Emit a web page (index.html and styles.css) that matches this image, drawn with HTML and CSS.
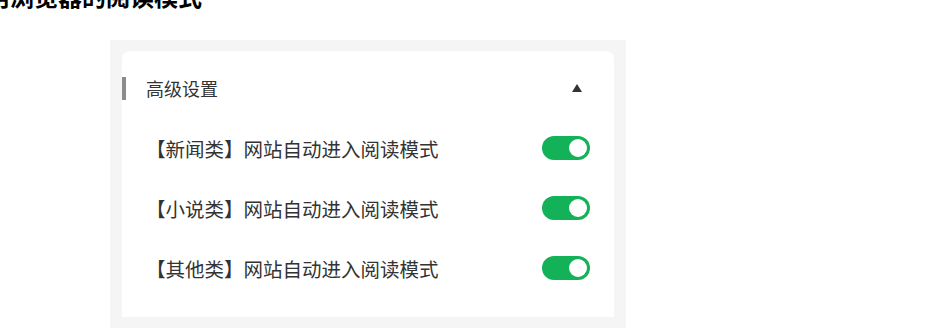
FILE: index.html
```html
<!DOCTYPE html>
<html lang="zh-CN">
<head>
<meta charset="utf-8">
<link rel="stylesheet" href="styles.css">
</head>
<body>
<h2 class="page-title">启用浏览器的阅读模式</h2>
<div class="panel">
  <div class="card">
    <div class="card-header">
      <span class="marker"></span>
      <span class="card-title">高级设置</span>
      <span class="caret"></span>
    </div>
    <div class="row">
      <span class="row-label">【新闻类】网站自动进入阅读模式</span>
      <span class="switch on"><span class="knob"></span></span>
    </div>
    <div class="row">
      <span class="row-label">【小说类】网站自动进入阅读模式</span>
      <span class="switch on"><span class="knob"></span></span>
    </div>
    <div class="row">
      <span class="row-label">【其他类】网站自动进入阅读模式</span>
      <span class="switch on"><span class="knob"></span></span>
    </div>
  </div>
</div>
</body>
</html>
```
FILE: styles.css
```css
html, body {
  margin: 0;
  padding: 0;
  background: #ffffff;
  overflow: hidden;
  font-family: "Noto Sans CJK SC", "Noto Sans", sans-serif;
}

.page-title {
  margin: -16px 0 0 0;
  font-size: 24px;
  line-height: 24px;
  font-weight: 700;
  color: #000;
  white-space: nowrap;
  text-indent: -38px;
}

.panel {
  margin: 32px 0 0 110px;
  width: 516px;
  box-sizing: border-box;
  padding: 11px 12px 20px 12px;
  background: #f5f5f5;
}

.card {
  background: #ffffff;
  border-radius: 8px 8px 0 0;
  padding: 13px 24px 19px 0;
}

.card-header {
  display: flex;
  align-items: center;
  height: 48px;
  margin-bottom: 6px;
}

.marker {
  width: 4px;
  height: 23px;
  background: #8c8c8c;
  margin-right: 20px;
}

.card-title {
  flex: 1;
  font-size: 18px;
  color: #333;
}

.caret {
  width: 0;
  height: 0;
  border-left: 5px solid transparent;
  border-right: 5px solid transparent;
  border-bottom: 8px solid #333;
  margin-right: 8px;
}

.row {
  display: flex;
  align-items: center;
  justify-content: space-between;
  height: 60px;
  padding-left: 24px;
}

.row-label {
  font-size: 19.5px;
  color: #333;
  white-space: nowrap;
}

.switch {
  position: relative;
  width: 48px;
  height: 24px;
  border-radius: 12px;
  background: #ccc;
}

.switch.on {
  background: #13b158;
}

.knob {
  position: absolute;
  top: 3px;
  right: 3px;
  width: 18px;
  height: 18px;
  border-radius: 50%;
  background: #fff;
}
```
